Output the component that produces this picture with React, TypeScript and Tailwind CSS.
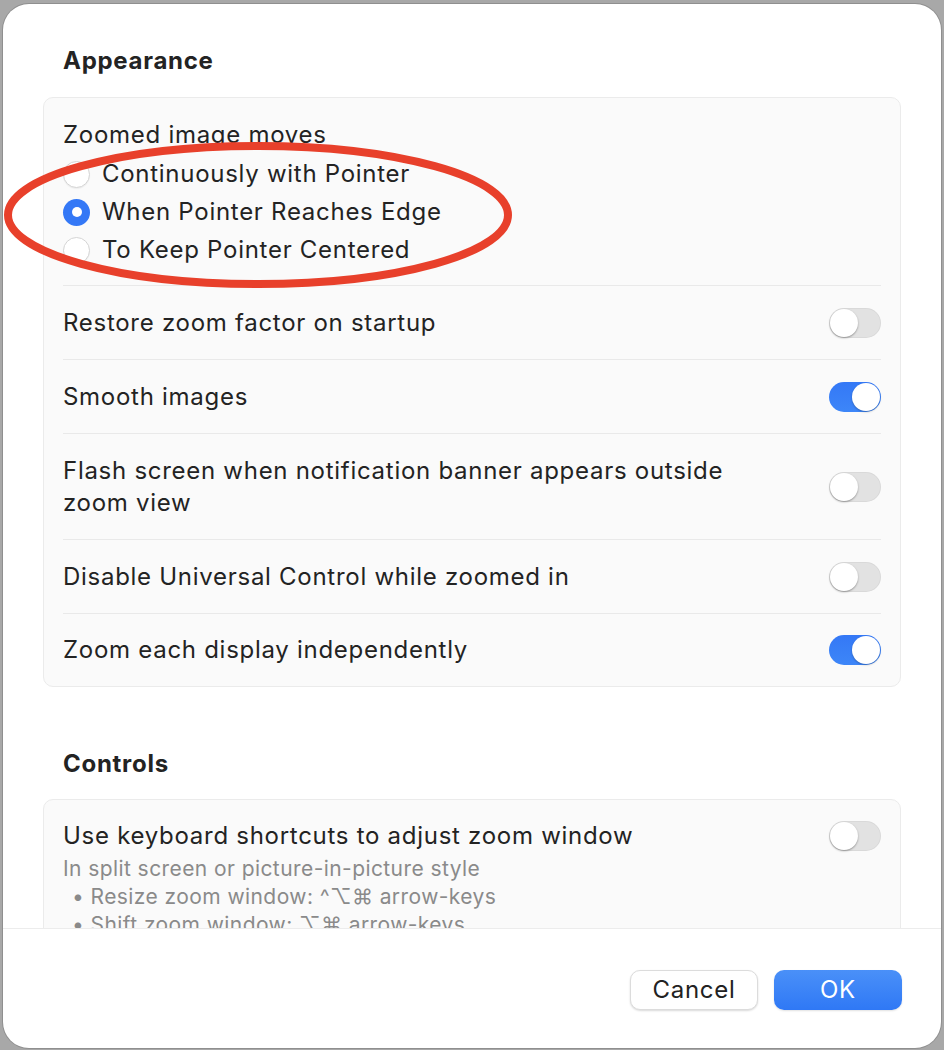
const font = { fontFamily: "Inter, 'Noto Sans', 'DejaVu Sans', sans-serif" };

function Toggle({ on }: { on?: boolean }) {
  return (
    <div
      className={
        on
          ? "relative h-[30px] w-[52px] shrink-0 rounded-full bg-gradient-to-b from-[#3478f6] to-[#3d86f8]"
          : "relative h-[30px] w-[52px] shrink-0 rounded-full bg-[#e2e2e2] shadow-[inset_0_0_0_1px_rgba(0,0,0,0.04)]"
      }
    >
      <div
        className={
          on
            ? "absolute right-[1px] top-[1px] h-[28px] w-[28px] rounded-full bg-white shadow-[0_1px_2px_rgba(0,0,0,0.25)]"
            : "absolute left-[1px] top-[1px] h-[28px] w-[28px] rounded-full bg-white shadow-[0_1px_2px_rgba(0,0,0,0.35)]"
        }
      />
    </div>
  );
}

function Radio({ label, checked }: { label: string; checked?: boolean }) {
  return (
    <div className="flex h-[38px] items-center gap-[12px]">
      {checked ? (
        <div className="flex h-[27px] w-[27px] items-center justify-center rounded-full bg-[#3478f6]">
          <div className="h-[10px] w-[10px] rounded-full bg-white" />
        </div>
      ) : (
        <div className="h-[27px] w-[27px] rounded-full border border-[#d4d4d4] bg-white shadow-[0_1px_1px_rgba(0,0,0,0.05)]" />
      )}
      <span>{label}</span>
    </div>
  );
}

function Row({ label, on, last, tall }: { label: string; on?: boolean; last?: boolean; tall?: boolean }) {
  return (
    <div
      className={`flex items-center justify-between gap-6 ${tall ? "h-[106px]" : last ? "h-[72px]" : "h-[74px]"} ${last ? "" : "border-b border-[#e9e9e9]"}`}
    >
      <span className="max-w-[700px] leading-[32px]">{label}</span>
      <Toggle on={on} />
    </div>
  );
}

export default function App() {
  return (
    <div className="relative h-[1050px] w-[944px] overflow-hidden bg-[#a8a8a8] pl-[3px] pt-[4px]" style={font}>
      <div className="flex h-[1044px] w-[938px] flex-col overflow-hidden rounded-[26px] bg-white text-[24px] tracking-[0.03em] text-[#232323] shadow-[0_0_0_1px_rgba(0,0,0,0.15)]">
        <div className="h-[924px] overflow-hidden px-[40px] pt-[37px]">
          <h2 className="flex h-[40px] items-center pl-[20px] text-[24px] font-bold">Appearance</h2>
          <div className="mt-[16px] rounded-[10px] border border-[#ebebeb] bg-[#fafafa] px-[19px]">
            <div className="border-b border-[#e9e9e9] pb-[16px] pt-[17px]">
              <div className="flex h-[40px] items-center">Zoomed image moves</div>
              <Radio label="Continuously with Pointer" />
              <Radio label="When Pointer Reaches Edge" checked />
              <Radio label="To Keep Pointer Centered" />
            </div>
            <Row label="Restore zoom factor on startup" />
            <Row label="Smooth images" on />
            <Row label="Flash screen when notification banner appears outside zoom view" tall />
            <Row label="Disable Universal Control while zoomed in" />
            <Row label="Zoom each display independently" on last />
          </div>

          <h2 className="mt-[57px] flex h-[40px] items-center pl-[20px] text-[24px] font-bold">Controls</h2>
          <div className="mt-[15px] rounded-[10px] border border-[#ebebeb] bg-[#fafafa] px-[19px] pb-6 pt-[20px]">
            <div className="flex items-center justify-between">
              <span className="leading-[32px]">Use keyboard shortcuts to adjust zoom window</span>
              <Toggle />
            </div>
            <div className="mt-[3px] text-[21px] tracking-[0.02em] leading-[28px] text-[#8a8a8a]">
              <div>In split screen or picture-in-picture style</div>
              <div className="pl-[9px]">• Resize zoom window: ^⌥⌘ arrow-keys</div>
              <div className="pl-[9px]">• Shift zoom window: ⌥⌘ arrow-keys</div>
            </div>
          </div>
        </div>

        <div className="flex flex-1 items-start justify-end gap-[16px] border-t border-[#ececec] pr-[39px] pt-[41px]">
          <button className="h-[40px] w-[128px] rounded-[10px] border border-[#dcdcdc] bg-white text-[24px] text-[#222] shadow-[0_1px_2px_rgba(0,0,0,0.15)]">
            Cancel
          </button>
          <button className="h-[40px] w-[128px] rounded-[10px] bg-gradient-to-b from-[#4a90f8] to-[#2f78f5] text-[24px] text-white shadow-[0_1px_2px_rgba(0,0,0,0.12)]">
            OK
          </button>
        </div>
      </div>

      <svg className="pointer-events-none absolute left-0 top-0" width="944" height="1050">
        <ellipse cx="258" cy="215" rx="250" ry="69" fill="none" stroke="#e8402b" strokeWidth="8" />
      </svg>
    </div>
  );
}
